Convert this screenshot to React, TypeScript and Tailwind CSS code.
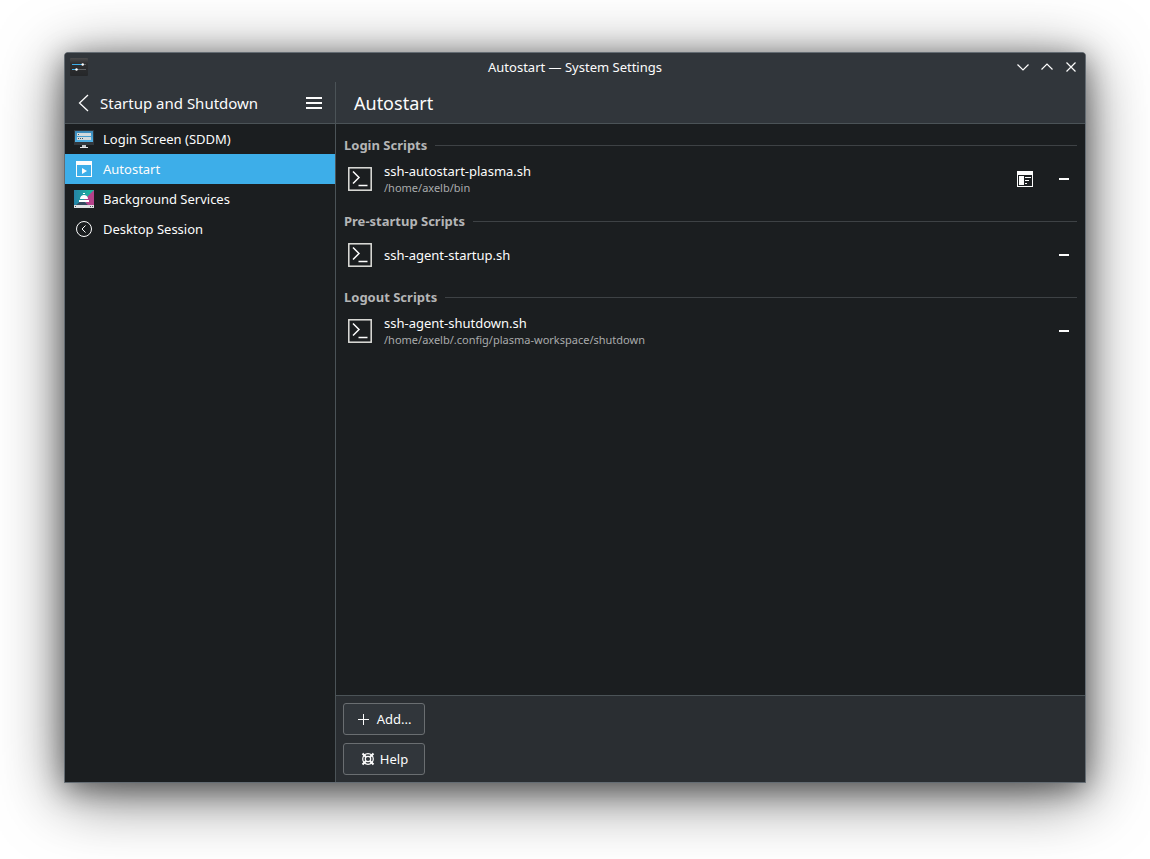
import { useState } from 'react'

const TerminalIcon = () => (
    <svg className="h-8 w-8 shrink-0" viewBox="0 0 32 32" fill="none" stroke="#e0e0dc" strokeWidth="1.5">
        <rect x="4.800" y="4.800" width="22.400" height="22.400" />
        <path d="M9 8.500l6 6-6 6M14.500 22.500h9" stroke="#fcfcfc" />
    </svg>
)

const PropertiesIcon = () => (
    <svg width="22" height="22" viewBox="0 0 22 22" fill="#fcfcfc">
        <path fillRule="evenodd" d="M3 3h16v16H3zM4 7v11h14V7z" />
        <path d="M5 8h5v9H5zM11 9h6v1h-6zM11 12h4v1h-4zM11 15h2v1h-2z" />
    </svg>
)

const SettingsIcon = () => (
    <svg width="18" height="18" viewBox="0 0 18 18">
        <defs>
            <linearGradient id="settings" x2="0" y2="1">
                <stop stopColor="#4a4a4b" />
                <stop offset=".3" stopColor="#2e2f31" />
                <stop offset="1" stopColor="#252729" />
            </linearGradient>
        </defs>
        <rect width="18" height="18" rx="1" fill="url(#settings)" />
        <path d="M2 6.500h14M2 11.500h14" stroke="#606366" />
        <path d="M2 6.500h10M2 11.500h4" stroke="#3daee9" />
        <circle cx="12.700" cy="6.500" r="1.200" fill="#fff" />
        <circle cx="6.500" cy="11.500" r="1.200" fill="#fff" />
    </svg>
)

const LoginScreenIcon = () => (
    <svg width="22" height="22" viewBox="0 0 22 22">
        <defs>
            <linearGradient id="screen" x2="0" y2="1">
                <stop stopColor="#3b86b4" />
                <stop offset="1" stopColor="#4fb3e8" />
            </linearGradient>
        </defs>
        <path d="M1 2h20v15H1z" fill="#33383d" />
        <path d="M2 3h18v11H2z" fill="url(#screen)" />
        <path d="M4 5h14v3H4zM4 9h14v3H4z" fill="#d3dadd" />
        <path d="M5 6h1v1H5zM5 10h1v1H5zM7 10h1v1H7zM9 10h1v1H9z" fill="#4d5357" />
        <path d="M9 17h4v2H9z" fill="#c4c6c8" />
        <path d="M7 19h8v1H7z" fill="#e3e5e7" />
    </svg>
)

const AutostartIcon = () => (
    <svg width="22" height="22" viewBox="0 0 22 22" fill="#fcfcfc">
        <path fillRule="evenodd" d="M3 3h16v16H3zM4 7v11h14V7z" />
        <path d="M9 10l5 3-5 3z" />
    </svg>
)

const ServicesIcon = () => (
    <svg width="22" height="22" viewBox="0 0 22 22">
        <defs>
            <linearGradient id="teal" x2="1" y2="0">
                <stop stopColor="#2683a8" />
                <stop offset="1" stopColor="#1abc9c" />
            </linearGradient>
        </defs>
        <path d="M1 2h20v15H1z" fill="url(#teal)" />
        <path d="M21 2v15h-7l-3-5z" fill="#b5428a" />
        <path d="M3 17l6-5 6 5z" fill="#34495e" />
        <path d="M1 17h20v3H1z" fill="#dfe1e3" />
        <path d="M2 18h1v1H2zM17 18h1v1h-1zM19 18h1v1h-1z" fill="#4d5357" />
        <path d="M10 5h2v1h-2zM7 11c0-5.500 8-5.500 8 0zM6 12h10v2H6z" fill="#fff" />
    </svg>
)

const SessionIcon = () => (
    <svg width="22" height="22" viewBox="0 0 22 22" fill="none" stroke="#fcfcfc">
        <circle cx="11" cy="11" r="7.500" />
        <path d="M12.500 7.500L9 11l3.500 3.500" />
    </svg>
)

const HelpIcon = () => (
    <svg width="16" height="16" viewBox="0 0 16 16" fill="none" stroke="#fcfcfc">
        <circle cx="8" cy="8" r="5.300" strokeWidth="1.200" />
        <circle cx="8" cy="8" r="2.700" strokeWidth="1.200" />
        <path d="M2.500 2.500l3.500 3.500M13.500 2.500L10 6M2.500 13.500L6 10M13.500 13.500L10 10" strokeWidth="2" />
    </svg>
)

const modules = [
    { name: 'Login Screen (SDDM)', icon: <LoginScreenIcon /> },
    { name: 'Autostart', icon: <AutostartIcon /> },
    { name: 'Background Services', icon: <ServicesIcon /> },
    { name: 'Desktop Session', icon: <SessionIcon /> },
]

const sections = [
    { title: 'Login Scripts', script: 'ssh-autostart-plasma.sh', path: '/home/axelb/bin', properties: true },
    { title: 'Pre-startup Scripts', script: 'ssh-agent-startup.sh' },
    { title: 'Logout Scripts', script: 'ssh-agent-shutdown.sh', path: '/home/axelb/.config/plasma-workspace/shutdown' },
]

const windowButtons = [
    { label: 'Minimize', d: 'M3.500 6.500L9 12l5.500-5.500' },
    { label: 'Maximize', d: 'M3.500 11.500L9 6l5.500 5.500' },
    { label: 'Close', d: 'M4.500 4.500l9 9M13.500 4.500l-9 9' },
]

const footerButton =
    'flex h-8 w-[82px] items-center justify-center gap-1 rounded-[3px] border border-[#6a6e71] bg-[#31363b] hover:border-[#3daee9]'

const App = () => {
    const [current, setCurrent] = useState('Autostart')

    return (
        <div className="flex min-h-screen bg-white px-16 pt-[52px] pb-[76px] font-['Noto_Sans',sans-serif] text-[13px] leading-[18px] text-[#fcfcfc]">
            <div className="flex flex-1 flex-col overflow-hidden rounded-t-[4px] border border-[#646c73] bg-[#1b1e20] shadow-[0_12px_64px_rgba(0,0,0,0.6),0_6px_28px_rgba(0,0,0,0.4)]">
                <div className="grid grid-cols-[1fr_auto_1fr] bg-[#31363b] px-[5px] pt-[5px] pb-[6px]">
                    <SettingsIcon />
                    <h1>Autostart — System Settings</h1>
                    <div className="flex justify-end gap-[6px]">
                        {windowButtons.map((button) => (
                            <button key={button.label} aria-label={button.label}>
                                <svg width="18" height="18" viewBox="0 0 18 18" fill="none" stroke="#fcfcfc" strokeWidth="1.2">
                                    <path d={button.d} />
                                </svg>
                            </button>
                        ))}
                    </div>
                </div>

                <div className="flex flex-1">
                    <aside className="flex w-[271px] shrink-0 flex-col border-r border-[#4b5357]">
                        <div className="flex h-[42px] items-center border-b border-[#4b5357] bg-[#31363b] px-2 pt-px">
                            <button aria-label="Back">
                                <svg width="22" height="22" viewBox="0 0 22 22" fill="none" stroke="#fcfcfc" strokeWidth="1.3">
                                    <path d="M15 3L6.500 11l8.500 8" />
                                </svg>
                            </button>
                            <h2 className="flex-1 pl-[5px] text-[15px]">Startup and Shutdown</h2>
                            <button aria-label="Menu" className="px-[2px]">
                                <svg width="22" height="22" viewBox="0 0 22 22" fill="#fcfcfc">
                                    <path d="M3 5h16v2H3zM3 10h16v2H3zM3 15h16v2H3z" />
                                </svg>
                            </button>
                        </div>
                        <nav className="flex flex-col">
                            {modules.map((item) => (
                                <button
                                    key={item.name}
                                    onClick={() => setCurrent(item.name)}
                                    className={`flex h-[30px] items-center gap-2 px-2 text-left ${current === item.name ? 'bg-[#3daee9]' : ''}`}
                                >
                                    {item.icon}
                                    <span>{item.name}</span>
                                </button>
                            ))}
                        </nav>
                    </aside>

                    <main className="flex min-w-0 flex-1 flex-col">
                        <div className="flex h-[42px] items-center border-b border-[#4b5357] bg-[#31363b] px-[18px] pt-px">
                            <h2 className="text-[18px]">Autostart</h2>
                        </div>

                        <div className="flex-1">
                            {sections.map((section) => (
                                <section key={section.title} className="pt-2">
                                    <div className="flex h-[26px] items-center gap-2 px-2">
                                        <h3 className="font-bold text-[#b4b5b6]">{section.title}</h3>
                                        <div className="h-px flex-1 bg-[#3e4245]" />
                                    </div>
                                    <div className="flex h-[42px] items-center gap-2 pr-[5px] pl-2">
                                        <TerminalIcon />
                                        <div className="min-w-0 flex-1">
                                            <p>{section.script}</p>
                                            {section.path && (
                                                <p className="text-[11px] leading-4 text-[#a9abac]">{section.path}</p>
                                            )}
                                        </div>
                                        <div className="flex gap-[7px]">
                                            {section.properties && (
                                                <button aria-label="Properties" className="flex h-8 w-8 items-center justify-center">
                                                    <PropertiesIcon />
                                                </button>
                                            )}
                                            <button aria-label="Remove" className="flex h-8 w-8 items-center justify-center">
                                                <svg width="22" height="22" viewBox="0 0 22 22" fill="#fcfcfc">
                                                    <path d="M6 10h10v2H6z" />
                                                </svg>
                                            </button>
                                        </div>
                                    </div>
                                </section>
                            ))}
                        </div>

                        <footer className="flex flex-col gap-2 border-t border-[#4b5357] bg-[#2a2e32] p-[7px]">
                            <button className={footerButton}>
                                <svg width="16" height="16" viewBox="0 0 16 16" fill="none" stroke="#fcfcfc">
                                    <path d="M1 8.500h11M6.500 3v11" />
                                </svg>
                                Add...
                            </button>
                            <button className={footerButton}>
                                <HelpIcon />
                                Help
                            </button>
                        </footer>
                    </main>
                </div>
            </div>
        </div>
    )
}

export default App
